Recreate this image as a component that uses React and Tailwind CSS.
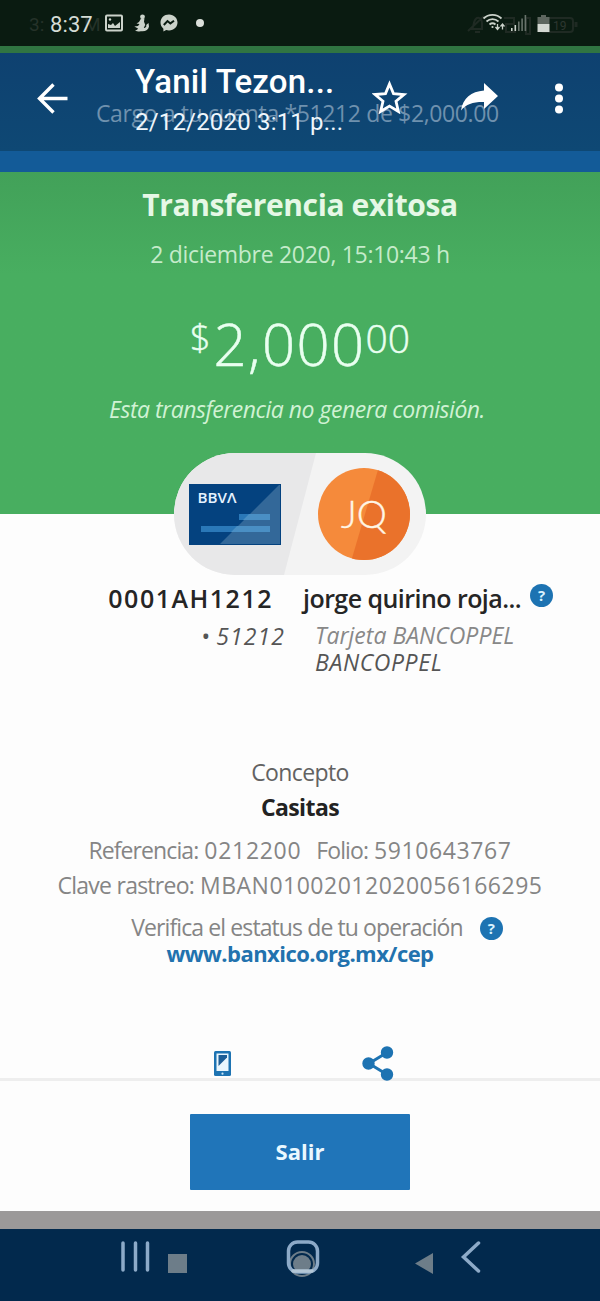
const StatusBar = () => (
  <div className="relative h-[46px] bg-[#0a1b11] font-['Roboto',sans-serif]">
    {/* Faded layer behind the live status icons */}
    <span className="absolute left-[29px] top-[15px] text-[19px] leading-5 text-[#253229]">3:</span>
    <span className="absolute left-[84px] top-[15px] text-[19px] leading-5 text-[#253229]">M</span>
    <svg className="absolute left-[464px] top-[10px]" width="120" height="28" fill="none" stroke="#1f2a23" strokeWidth="2">
      <path d="M4 21 20 6M8 19c2-2 1-9 5-11 3-1 5 2 5 5v6zM11 22h5M40 8h10v6h-8v8h10M62 8h4v16h-4z" />
      <rect x="77" y="8" width="32" height="14" rx="3" />
      <path d="M112 12v5" strokeWidth="3" />
    </svg>
    <span className="absolute left-[553px] top-[18px] text-[12px] leading-4 text-[#2d3730]">19</span>

    <div className="relative flex h-full items-center pl-[50px]">
      <span className="w-[43px] whitespace-nowrap pt-[3px] text-[22px] leading-6 tracking-[0.1px] text-[#d5dcd5]">8:37</span>
      <svg className="ml-[12px]" width="18" height="18" viewBox="0 0 18 18" fill="none">
        <rect x="1" y="1.500" width="16" height="15" rx="1" stroke="#cbd2ca" strokeWidth="2" />
        <path d="M3 14V10l3 1 2-2 2 3 5-4v6z" fill="#cbd2ca" />
        <circle cx="5" cy="5.5" r="1.2" fill="#cbd2ca" />
      </svg>
      <svg className="ml-[11px]" width="15" height="18" viewBox="0 0 15 18" fill="#cbd2ca">
        <circle cx="8.5" cy="2.8" r="2.4" />
        <path d="M7 4.5h3.4l-.4 3.2 1.2 3-1.4 3.2c1.600.2 2.700-1 2.800-2.300l-1-.2L14.500 9l.5 3.500c-.5 3-3 4.800-6.500 4.800-2 0-5 .6-7.500-.8 1.500-.3 2.600-1 3-2L.3 12.600 4 12l1.500-2-3-.5L5 8z" />
      </svg>
      <svg className="ml-[11px]" width="18" height="18" viewBox="0 0 18 18">
        <path d="M9 .5C4 .5.5 4 .5 8.600c0 2.500 1.100 4.600 2.900 6.100v2.800l2.800-1.400c.9.300 1.800.4 2.800.4 5 0 8.500-3.500 8.500-7.900S14 .5 9 .5z" fill="#cbd2ca" />
        <path d="m3.800 11 3.700-4 2.900 2.400L14 6.800" fill="none" stroke="#0a1b11" strokeWidth="2" />
      </svg>
      <span className="ml-[18px] size-2 rounded-full bg-[#dbe0da]" />
      <svg className="ml-[278px]" width="24" height="20" viewBox="0 0 24 20" fill="none" stroke="#cbd2ca" strokeWidth="1.800">
        <path d="M1.500 5.500C6.500.7 14.500.7 19.500 5.500M4.500 8.500c3.500-3.200 8.500-3.200 12 0M7.500 11.500c2-1.600 4-1.600 6 0" />
        <circle cx="10.500" cy="14" r="1.100" fill="#cbd2ca" stroke="none" />
        <path d="M15.500 11v5m-2-2 2 2.500 2-2.500M20.500 16.500v-5m-2 2 2-2.500 2 2.500" strokeWidth="1.300" />
      </svg>
      <svg className="ml-[4px]" width="18" height="18" viewBox="0 0 18 18">
        <path d="M1 14h1.600v3H1zM4.500 11h1.600v6H4.500z" fill="#cbd2ca" />
        <path d="M8 7.500h1.600V17H8zM11.300 4.500h1.600V17h-1.600zM14.600 1h1.600v16h-1.600z" fill="#68736b" />
      </svg>
      <svg className="ml-[9px]" width="13" height="19" viewBox="0 0 13 19">
        <path d="M4 1h5v2h3.500v7H.5V3H4z" fill="#5d665f" />
        <path d="M.5 10h12v8H.5z" fill="#d3d8d2" />
      </svg>
    </div>
  </div>
);

const ViewerHeader = () => (
  <div className="relative h-[98px] bg-linear-to-b from-[#0e4170] to-[#0e4874] font-['Roboto',sans-serif]">
    <p className="absolute left-[96px] top-[46px] whitespace-nowrap font-['Open_Sans',sans-serif] text-[23px] leading-7 tracking-[-0.37px] text-[#6f91ae]">
      Cargo a tu cuenta *51212 de $2,000.00
    </p>
    <div className="relative flex h-full text-white">
      <svg className="ml-[36px] mt-[30px] shrink-0" width="34" height="32" viewBox="0 0 34 32" fill="none" stroke="currentColor" strokeWidth="3.400">
        <path d="M31.500 15.500H4M17.500 1.500l-14 14 14 14" />
      </svg>
      <div className="ml-[65px] w-[215px] shrink-0 whitespace-nowrap">
        <h1 className="mt-[12px] text-[33px] font-medium leading-[34px] tracking-[0.2px]">Yanil Tezon...</h1>
        <p className="mt-[9px] text-[24px] leading-7 tracking-[0.18px] text-[#eef6fc]">2/12/2020 3:11 p...</p>
      </div>
      <svg className="ml-[22px] mt-[27px] shrink-0" width="36" height="34" viewBox="0 0 36 34" fill="none" stroke="currentColor" strokeWidth="2.800">
        <path d="m17.500 4 4 9.600 10.500.9-8 6.800 2.400 10.200-8.900-5.400-8.900 5.400L11 21.300l-8-6.800 10.500-.9z" />
      </svg>
      <svg className="ml-[52px] mt-[30px] shrink-0" width="40" height="30" viewBox="0 0 40 30" fill="currentColor">
        <path d="M24 0v7.500C11 8.500 3 15 1 27.500c5.500-6.500 12-8.700 23-8.500v7l14-13z" />
      </svg>
      <svg className="ml-[53px] mt-[30px] shrink-0" width="12" height="32" viewBox="0 0 12 32" fill="currentColor">
        <circle cx="6" cy="4.500" r="4" />
        <circle cx="6" cy="15.500" r="4" />
        <circle cx="6" cy="26.500" r="4" />
      </svg>
    </div>
  </div>
);

const AccountsBadge = () => (
  <svg className="absolute left-[174px] top-[281px]" width="252" height="122" viewBox="0 0 252 122">
    <defs>
      <clipPath id="pill">
        <rect width="252" height="122" rx="61" />
      </clipPath>
      <clipPath id="avatar">
        <circle cx="190" cy="61" r="46" />
      </clipPath>
    </defs>
    <g clipPath="url(#pill)">
      <path d="M0 0h252v122H0z" fill="#f3f3f3" />
      <path d="M0 0h142l-32 122H0z" fill="#e8e8e9" />
    </g>
    <path d="M15 31h92v61H15z" fill="#04427f" />
    <path d="M106 31v61H45z" fill="#336899" />
    <path d="M65 61h31v6H65zM27 73h69v6H27z" fill="#2a78b8" />
    <path d="M75 61h21v6H69zM63 73h33v6H57z" fill="#4a8fc4" />
    <path d="M15.500 31.500h91v60h-91z" fill="none" stroke="#04427f" />
    {/* BBVA wordmark, the last letter has no crossbar */}
    <text x="23.500" y="50" fill="#e6f3ff" fontFamily="Open Sans, sans-serif" fontSize="14" fontWeight="600" textLength="39" lengthAdjust="spacingAndGlyphs">BBVΛ</text>
    <g clipPath="url(#avatar)">
      <path d="M140 10h100v102H140z" fill="#f58a3b" />
      <path d="M206 10h40v102h-70z" fill="#ea722b" />
    </g>
    <text x="190" y="75" fill="#fff6e5" textAnchor="middle" fontFamily="Lato, sans-serif" fontSize="38" fontWeight="300" stroke="#fff6e5" strokeWidth="0.4">JQ</text>
  </svg>
);

const Help = ({ className }) => (
  <span
    className={`flex size-[23px] shrink-0 items-center justify-center rounded-full bg-[#1d73b2] text-[15px] font-bold leading-none text-[#d9f2ff] ${className}`}
  >
    ?
  </span>
);

const TransferHero = () => (
  <section className="relative flex h-[342px] flex-col items-center whitespace-nowrap bg-[#48ae60] bg-linear-to-b from-[#42a159] to-[#48ae60] to-30% text-[#e6f8e6]">
    <h2 className="mt-[14px] text-[30px] font-bold leading-[38px] tracking-[-0.38px]">Transferencia exitosa</h2>
    <p className="mt-[15px] text-[23px] leading-[30px] tracking-[-0.3px] text-[#c5ebcb]">2 diciembre 2020, 15:10:43 h</p>
    <div className="mt-[44px] flex h-[64px] font-light text-[#e9fff0] [-webkit-text-stroke:0.5px_#e9fff0]">
      <span className="text-[36px] leading-[50px]">$</span>
      <span className="ml-[3px] text-[58px] leading-[62px] tracking-[1.4px]">2,000</span>
      <span className="text-[39px] leading-[49px]">00</span>
    </div>
    <p className="mt-[17px] pr-[6px] text-[23px] italic leading-[30px] tracking-[-0.48px] text-[#d0f2d4]">
      Esta transferencia no genera comisión.
    </p>
    <AccountsBadge />
  </section>
);

const TransferDetails = () => (
  <section className="h-[567px] whitespace-nowrap border-b-3 border-[#eeeeee] bg-[#fdfdfd]">
    <div className="flex h-[163px] pt-[69px]">
      <div className="w-[285px] shrink-0 text-right">
        <p className="pr-[12px] text-[25px] font-semibold leading-[30px] tracking-[1.5px] text-[#252525]">0001AH1212</p>
        <p className="mt-[8px] text-[23px] italic leading-[30px] tracking-[1.1px] text-[#555]">
          <span className="not-italic">•</span>
          <span className="ml-[5px]">51212</span>
        </p>
      </div>
      <div className="ml-[18px] w-[220px] shrink-0">
        <p className="text-[25px] font-semibold leading-[30px] tracking-[-0.55px] text-[#252525]">jorge quirino roja...</p>
        <p className="mt-[9px] pl-[12px] text-[23px] italic leading-[27px] text-[#888]">Tarjeta BANCOPPEL</p>
        <p className="pl-[12px] text-[23px] italic leading-[27px] tracking-[0.6px] text-[#555]">BANCOPPEL</p>
      </div>
      <Help className="ml-[7px] mt-px" />
    </div>
    <div className="mt-[80px] flex flex-col items-center text-[23px] leading-[30px] text-[#858585]">
      <p className="tracking-[-0.6px] text-[#626262]">Concepto</p>
      <p className="mt-[5px] font-bold tracking-[-0.6px] text-[#222]">Casitas</p>
      <p className="mt-[13px] flex">
        <span className="tracking-[-0.9px]">Referencia:</span>
        <span className="ml-[6px] tracking-[0.7px]">0212200</span>
        <span className="ml-[15px] tracking-[-0.9px]">Folio:</span>
        <span className="ml-[6px] tracking-[0.6px]">5910643767</span>
      </p>
      <p className="mt-[5px] flex">
        <span className="tracking-[-0.75px]">Clave rastreo:</span>
        <span className="ml-[6px] tracking-[0.5px]">MBAN01002012020056166295</span>
      </p>
      <div className="mt-[14px] flex h-[26px] items-center pl-[34px]">
        <p className="leading-[26px] tracking-[-0.9px]">Verifica el estatus de tu operación</p>
        <Help className="ml-[17px] mt-[3px]" />
      </div>
      <p className="text-[22px] font-bold leading-[26px] tracking-[-0.55px] text-[#2272ae]">www.banxico.org.mx/cep</p>
    </div>
    <div className="mt-[79px] flex">
      <svg className="ml-[213px] mt-[5px]" width="20" height="28" viewBox="0 0 20 28">
        <rect x="1" y="1" width="17" height="25" rx="1.500" fill="#1d73b2" />
        <path d="M3.500 3.500h12v17.500h-12z" fill="#eaf6fd" />
        <path d="M5.500 5H14v2.500L5.500 16z" fill="#1d5e97" />
        <circle cx="9.500" cy="23.700" r="1.100" fill="#c9e5f7" />
      </svg>
      <svg className="ml-[129px] mt-[1px]" width="32" height="36" viewBox="0 0 32 36" fill="#1d73b2" stroke="#1d73b2" strokeWidth="3">
        <path d="M25 6.500 7 17.500l18 11" fill="none" />
        <circle cx="25" cy="6.500" r="4.700" />
        <circle cx="6.500" cy="17.500" r="4.700" />
        <circle cx="25" cy="28.500" r="4.700" />
      </svg>
    </div>
  </section>
);

const NavBar = () => (
  <div className="h-[72px] bg-[#02294d]">
    <svg width="600" height="72" viewBox="0 0 600 72" fill="none" stroke="#8daac8" strokeWidth="3.500" strokeLinecap="round">
      <path d="M123 14v27M135.500 14v27M147.500 14v27" />
      <path d="M168 25h19v19h-19z" fill="#6d7d89" stroke="none" />
      <circle cx="302" cy="35" r="9" fill="#6d7d89" stroke="none" />
      <circle cx="302" cy="35" r="12" stroke="#6d7d89" strokeWidth="2" />
      <rect x="288.500" y="13" width="29" height="30" rx="9" />
      <path d="M293 42h19" stroke="#b3c6d6" />
      <path d="M415 34.500 433 24v21z" fill="#6d7d89" stroke="none" />
      <path d="M478.500 14 463.500 28l15 14" />
    </svg>
  </div>
);

export default function App() {
  return (
    <main className="h-[1301px] w-[600px] overflow-hidden bg-[#fdfdfd] font-['Open_Sans',sans-serif]">
      <StatusBar />
      <div className="h-[7px] bg-[#307542]" />
      <ViewerHeader />
      <div className="h-[21px] bg-[#135b98]" />
      <TransferHero />
      <TransferDetails />
      <div className="flex h-[130px] justify-center pt-[33px]">
        <button className="h-[76px] w-[220px] rounded-[1px] bg-[#2075b9] pb-[2px] text-[22px] font-bold text-[#eaf8ff]">
          Salir
        </button>
      </div>
      <div className="h-[18px] bg-[#9b9999]" />
      <NavBar />
    </main>
  );
}
